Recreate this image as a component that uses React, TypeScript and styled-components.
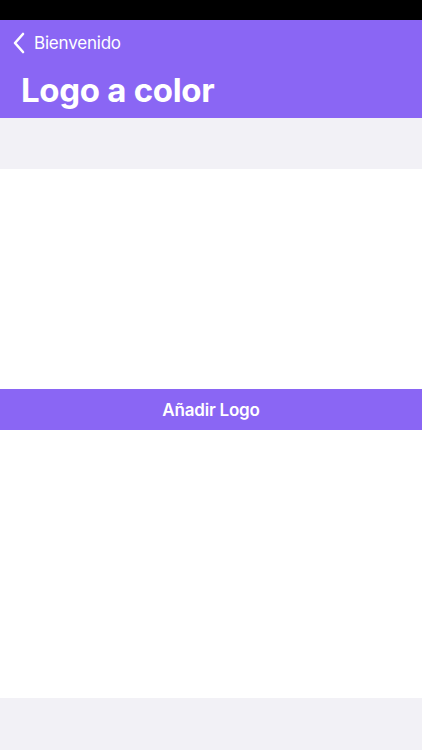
import { createGlobalStyle, styled } from "styled-components";

const GlobalStyle = createGlobalStyle`
  html, body {
    margin: 0;
    padding: 0;
    background: #ffffff;
    font-family: Inter, "Liberation Sans", sans-serif;
  }
`;

const Screen = styled.div`
  width: 422px;
  height: 750px;
  display: flex;
  flex-direction: column;
  background: #ffffff;
  overflow: hidden;
`;

const StatusBar = styled.div`
  height: 20px;
  background: #000000;
  flex-shrink: 0;
`;

const Header = styled.header`
  height: 98px;
  background: #8a66f4;
  display: flex;
  flex-direction: column;
  flex-shrink: 0;
`;

const BackButton = styled.div`
  height: 44px;
  padding-top: 2px;
  box-sizing: border-box;
  display: flex;
  align-items: center;
  gap: 9px;
  padding-left: 13px;
  color: #ffffff;
  font-size: 17px;
  letter-spacing: -0.2px;
`;

const Title = styled.h1`
  margin: 0;
  padding: 6px 0 0 21px;
  color: #ffffff;
  font-size: 33px;
  font-weight: 700;
  letter-spacing: -0.3px;
  line-height: 40px;
`;

const Spacer = styled.div<{ $height: number }>`
  height: ${(p) => p.$height}px;
  background: #f2f1f6;
  flex-shrink: 0;
`;

const Blank = styled.div<{ $height: number }>`
  height: ${(p) => p.$height}px;
  background: #ffffff;
  flex-shrink: 0;
`;

const ActionButton = styled.button`
  height: 41px;
  border: none;
  background: #8a66f4;
  color: #ffffff;
  font-family: Inter, "Liberation Sans", sans-serif;
  font-size: 17px;
  font-weight: 600;
  letter-spacing: -0.2px;
  flex-shrink: 0;
  padding: 0;
`;

const Filler = styled.div`
  flex: 1;
  background: #f2f1f6;
`;

function Chevron() {
  return (
    <svg width="12" height="22" viewBox="0 0 12 22" fill="none">
      <path
        d="M10 2L2 11l8 9"
        stroke="#ffffff"
        strokeWidth="2.6"
        strokeLinecap="round"
        strokeLinejoin="round"
      />
    </svg>
  );
}

export default function App() {
  return (
    <>
      <GlobalStyle />
      <Screen>
        <StatusBar />
        <Header>
          <BackButton>
            <Chevron />
            <span>Bienvenido</span>
          </BackButton>
          <Title>Logo a color</Title>
        </Header>
        <Spacer $height={51} />
        <Blank $height={220} />
        <ActionButton>Añadir Logo</ActionButton>
        <Blank $height={268} />
        <Filler />
      </Screen>
    </>
  );
}
